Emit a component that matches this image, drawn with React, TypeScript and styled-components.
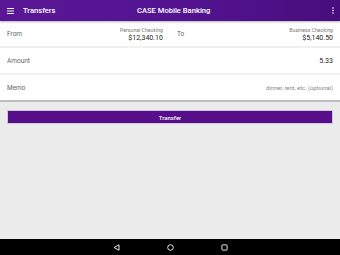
import styled, { createGlobalStyle } from "styled-components";

const Global = createGlobalStyle`
  html, body { margin: 0; padding: 0; }
  body {
    font-family: Roboto, "Noto Sans", "Liberation Sans", sans-serif;
    background: #ebebeb;
  }
  #root { width: 340px; height: 255px; }
`;

const Screen = styled.div`
  width: 340px;
  height: 255px;
  display: flex;
  flex-direction: column;
  background: #ebebeb;
`;

const AppBar = styled.header`
  height: 21px;
  display: flex;
  align-items: center;
  padding: 0 6px 0 7px;
  background: linear-gradient(90deg, #5a1795 0%, #531391 55%, #480d7c 100%);
  color: #fff;
  box-shadow: 0 1px 2px rgba(0, 0, 0, 0.3);
  position: relative;
  z-index: 1;
`;

const Title = styled.div`
  font-size: 7.6px;
  font-weight: 500;
  margin-left: 9px;
  width: 114px;
`;

const Center = styled.div`
  flex: 1;
  font-size: 7.6px;
  font-weight: 500;
`;

const Form = styled.section`
  background: #fff;
  border-bottom: 2px solid #bdbdbd;
`;

const Row = styled.div`
  height: 25px;
  display: flex;
  align-items: center;
  padding: 0 7px;
  & + & {
    border-top: 2px solid #f0f0f0;
  }
`;

const Half = styled.div<{ $right?: boolean }>`
  flex: 1;
  display: flex;
  align-items: center;
  padding-left: ${(p) => (p.$right ? "7px" : "0")};
  padding-right: ${(p) => (p.$right ? "0" : "7px")};
`;

const Label = styled.span`
  font-size: 6.5px;
  color: #666;
  flex: 1;
  padding-top: 1px;
`;

const Account = styled.div`
  display: flex;
  flex-direction: column;
  align-items: flex-end;
  padding-top: 1px;
`;

const AccName = styled.span`
  font-size: 5.2px;
  color: #777;
`;

const AccValue = styled.span`
  font-size: 7px;
  color: #222;
  margin-top: 1px;
`;

const Value = styled.span<{ $muted?: boolean }>`
  font-size: ${(p) => (p.$muted ? "5.8px" : "7px")};
  color: ${(p) => (p.$muted ? "#888" : "#222")};
  padding-top: 1px;
`;

const Body = styled.div`
  flex: 1;
  padding: 8px 7px 0 7px;
`;

const TransferButton = styled.button`
  display: block;
  width: 100%;
  height: 14px;
  border: 1px solid #cfc6d8;
  background: #560e8a;
  color: #fff;
  font-family: inherit;
  font-size: 6px;
  font-weight: 500;
  padding: 0;
`;

const NavBar = styled.nav`
  height: 16px;
  background: #000;
  display: flex;
  justify-content: center;
  align-items: center;
  gap: 47px;
`;

const Menu = () => (
  <svg width="7" height="6" viewBox="0 0 7 6">
    <rect x="0" y="0" width="7" height="1" fill="#fff" />
    <rect x="0" y="2.5" width="7" height="1" fill="#fff" />
    <rect x="0" y="5" width="7" height="1" fill="#fff" />
  </svg>
);

const More = () => (
  <svg width="2" height="7" viewBox="0 0 2 7">
    <circle cx="1" cy="1" r="0.8" fill="#fff" />
    <circle cx="1" cy="3.5" r="0.8" fill="#fff" />
    <circle cx="1" cy="6" r="0.8" fill="#fff" />
  </svg>
);

const App = () => {
  return (
    <Screen>
      <Global />
      <AppBar>
        <Menu />
        <Title>Transfers</Title>
        <Center>CASE Mobile Banking</Center>
        <More />
      </AppBar>
      <Form>
        <Row>
          <Half>
            <Label>From</Label>
            <Account>
              <AccName>Personal Checking</AccName>
              <AccValue>$12,340.10</AccValue>
            </Account>
          </Half>
          <Half $right>
            <Label>To</Label>
            <Account>
              <AccName>Business Checking</AccName>
              <AccValue>$5,140.50</AccValue>
            </Account>
          </Half>
        </Row>
        <Row>
          <Label>Amount</Label>
          <Value>5.33</Value>
        </Row>
        <Row>
          <Label>Memo</Label>
          <Value $muted>dinner, rent, etc. (optional)</Value>
        </Row>
      </Form>
      <Body>
        <TransferButton>Transfer</TransferButton>
      </Body>
      <NavBar>
        <svg width="7" height="7" viewBox="0 0 7 7">
          <path d="M6 0.8 L1 3.5 L6 6.2 Z" fill="none" stroke="#fff" strokeWidth="0.9" />
        </svg>
        <svg width="7" height="7" viewBox="0 0 7 7">
          <circle cx="3.5" cy="3.5" r="2.8" fill="none" stroke="#fff" strokeWidth="0.9" />
        </svg>
        <svg width="7" height="7" viewBox="0 0 7 7">
          <rect x="0.9" y="0.9" width="5.2" height="5.2" rx="0.6" fill="none" stroke="#fff" strokeWidth="0.9" />
        </svg>
      </NavBar>
    </Screen>
  );
};

export default App;
